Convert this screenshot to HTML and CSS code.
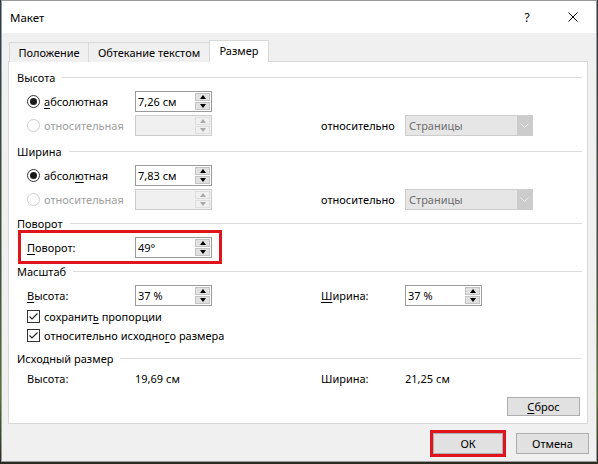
FILE: index.html
```html
<!DOCTYPE html>
<html lang="ru">
<head>
<meta charset="utf-8">
<title>Макет</title>
<link rel="stylesheet" href="styles.css">
</head>
<body>
<div class="window">
  <div class="titlebar">
    <span class="title">Макет</span>
    <span class="cap help">?</span>
    <span class="cap close"><svg width="10" height="10" viewBox="0 0 10 10"><path d="M0.5 0.5L9.5 9.5M9.5 0.5L0.5 9.5" stroke="#000" stroke-width="1" fill="none"/></svg></span>
  </div>
  <div class="content">
    <div class="tabs">
      <div class="tab t1">Положение</div>
      <div class="tab t2">Обтекание текстом</div>
      <div class="tab t3 active">Размер</div>
    </div>
    <div class="panel">
      <div class="group-title">Высота</div>
      <div class="row">
        <span class="opt"><span class="radio checked"></span><span><u>а</u>бсолютная</span></span>
        <div class="spin"><span class="val">7,26 см</span><span class="btns"><span class="btn"><i class="up"></i></span><span class="btn"><i class="down"></i></span></span></div>
      </div>
      <div class="row">
        <span class="opt dis"><span class="radio"></span><span>относительная</span></span>
        <div class="spin disabled"><span class="val"></span><span class="btns"><span class="btn"><i class="up"></i></span><span class="btn"><i class="down"></i></span></span></div>
        <span class="rel">относительно</span>
        <div class="select"><span class="sel-text">Страницы</span><span class="arrow"><svg width="9" height="5" viewBox="0 0 9 5"><path d="M0.5 0.5L4.5 4.5L8.5 0.5" stroke="#eaeaea" fill="none"/></svg></span></div>
      </div>

      <div class="group-title gt2">Ширина</div>
      <div class="row">
        <span class="opt"><span class="radio checked"></span><span>абсол<u>ю</u>тная</span></span>
        <div class="spin"><span class="val">7,83 см</span><span class="btns"><span class="btn"><i class="up"></i></span><span class="btn"><i class="down"></i></span></span></div>
      </div>
      <div class="row">
        <span class="opt dis"><span class="radio"></span><span>относительная</span></span>
        <div class="spin disabled"><span class="val"></span><span class="btns"><span class="btn"><i class="up"></i></span><span class="btn"><i class="down"></i></span></span></div>
        <span class="rel">относительно</span>
        <div class="select"><span class="sel-text">Страницы</span><span class="arrow"><svg width="9" height="5" viewBox="0 0 9 5"><path d="M0.5 0.5L4.5 4.5L8.5 0.5" stroke="#eaeaea" fill="none"/></svg></span></div>
      </div>

      <div class="group-title">Поворот</div>
      <div class="row marked">
        <span class="lbl"><u>П</u>оворот:</span>
        <div class="spin"><span class="val">49°</span><span class="btns"><span class="btn"><i class="up"></i></span><span class="btn"><i class="down"></i></span></span></div>
      </div>

      <div class="group-title">Масштаб</div>
      <div class="row">
        <span class="lbl"><u>В</u>ысота:</span>
        <div class="spin"><span class="val">37 %</span><span class="btns"><span class="btn"><i class="up"></i></span><span class="btn"><i class="down"></i></span></span></div>
        <span class="lbl"><u>Ш</u>ирина:</span>
        <div class="spin"><span class="val">37 %</span><span class="btns"><span class="btn"><i class="up"></i></span><span class="btn"><i class="down"></i></span></span></div>
      </div>
      <div class="check-row"><span class="cb"><svg width="11" height="11" viewBox="0 0 11 11"><path d="M1.5 5.5L4 8L9.5 2.5" stroke="#222" stroke-width="1.1" fill="none"/></svg></span><span>сохранит<u>ь</u> пропорции</span></div>
      <div class="check-row"><span class="cb"><svg width="11" height="11" viewBox="0 0 11 11"><path d="M1.5 5.5L4 8L9.5 2.5" stroke="#222" stroke-width="1.1" fill="none"/></svg></span><span>относительно исходно<u>г</u>о размера</span></div>

      <div class="group-title gt5">Исходный размер</div>
      <div class="row info">
        <span class="lbl">Высота:</span>
        <span class="lbl">19,69 см</span>
        <span class="lbl">Ширина:</span>
        <span class="lbl">21,25 см</span>
      </div>
      <div class="reset-row"><button class="btn-win reset"><u>С</u>брос</button></div>
    </div>
    <div class="footer">
      <button class="btn-win ok">ОК</button>
      <button class="btn-win cancel">Отмена</button>
    </div>
  </div>
</div>
</body>
</html>
```

FILE: styles.css
```css
html, body {
  margin: 0;
  padding: 0;
}
body {
  width: 598px;
  height: 464px;
  overflow: hidden;
  background: linear-gradient(to bottom, #2c3b4c 0%, #3c5a36 60%, #4f7a22 85%, #2a2a22 100%);
  font-family: "Noto Sans", "Open Sans", sans-serif;
  font-size: 11px;
  color: #000;
}
.window {
  margin-left: 1px;
  width: 596px;
  height: 462px;
  box-sizing: border-box;
  border: 1px solid #9a9a9a;
  background: #f0f0f0;
  display: flex;
  flex-direction: column;
}
.titlebar {
  height: 32px;
  background: #fff;
  display: flex;
  align-items: center;
}
.title {
  flex: 1;
  padding-left: 8px;
  font-size: 11.5px;
}
.cap {
  width: 46px;
  height: 32px;
  display: flex;
  align-items: center;
  justify-content: center;
}
.help {
  font-size: 12px;
}
.content {
  padding: 7px 7px 0 6px;
}
.tabs {
  display: flex;
  align-items: flex-end;
  height: 22px;
  margin-bottom: -1px;
  margin-left: 1px;
}
.tab {
  height: 20px;
  box-sizing: border-box;
  border: 1px solid #d9d9d9;
  border-bottom: none;
  background: #f0f0f0;
  display: flex;
  align-items: center;
  justify-content: center;
  padding-bottom: 1px;
}
.t1 { width: 80px; }
.t2 { width: 122px; margin-left: -1px; }
.t3 { width: 60px; margin-left: -1px; }
.tab.active {
  height: 22px;
  background: #fff;
  position: relative;
  z-index: 1;
  padding-bottom: 2px;
}
.panel {
  width: 580px;
  box-sizing: border-box;
  border: 1px solid #d9d9d9;
  background: #fff;
  padding: 3px 5px 7px 8px;
}
.group-title {
  height: 24px;
  display: flex;
  align-items: center;
  gap: 7px;
}
.group-title::after {
  content: "";
  flex: 1;
  border-top: 1px solid #dcdcdc;
  margin-top: 1px;
}
.gt2 { margin-top: 2px; }
.gt5 { margin-top: 1px; }
.row {
  display: grid;
  grid-template-columns: 108px 186px 84px 128px;
  align-items: center;
  height: 24px;
  margin-left: 10px;
}
.row.info { height: 16px; }
.row.marked { position: relative; }
.row.marked::before {
  content: "";
  position: absolute;
  left: -9px;
  top: -5px;
  width: 204px;
  height: 34px;
  box-sizing: border-box;
  border: 3px solid #e0141e;
}
.opt {
  display: flex;
  align-items: center;
  gap: 4px;
}
.opt.dis { color: #a0a0a0; }
.radio {
  width: 13px;
  height: 13px;
  box-sizing: border-box;
  border: 1px solid #333;
  border-radius: 50%;
  background: #fff;
  display: flex;
  align-items: center;
  justify-content: center;
}
.radio.checked::after {
  content: "";
  width: 7px;
  height: 7px;
  border-radius: 50%;
  background: #1a1a1a;
}
.opt.dis .radio { border-color: #cfcfcf; }
.spin {
  width: 77px;
  height: 21px;
  box-sizing: border-box;
  border: 1px solid #9a9a9a;
  background: #fff;
  display: flex;
}
.spin .val {
  flex: 1;
  padding-left: 2px;
  line-height: 19px;
}
.btns {
  width: 15px;
  margin: 1px 1px 1px 0;
  display: flex;
  flex-direction: column;
  gap: 1px;
  background: #fff;
}
.btn {
  flex: 1;
  background: #e1e1e1;
  border: 1px solid #c4c4c4;
  display: flex;
  align-items: center;
  justify-content: center;
}
.up {
  width: 0;
  height: 0;
  border-left: 3.5px solid transparent;
  border-right: 3.5px solid transparent;
  border-bottom: 4px solid #000;
}
.down {
  width: 0;
  height: 0;
  border-left: 3.5px solid transparent;
  border-right: 3.5px solid transparent;
  border-top: 4px solid #000;
}
.spin.disabled {
  border-color: #cccccc;
  background: #f0f0f0;
}
.spin.disabled .btns { background: #f0f0f0; }
.spin.disabled .btn {
  background: #f0f0f0;
  border-color: #dedede;
}
.spin.disabled .up { border-bottom-color: #a8a8a8; }
.spin.disabled .down { border-top-color: #a8a8a8; }
.rel { color: #000; }
.select {
  width: 128px;
  height: 21px;
  box-sizing: border-box;
  border: 1px solid #cccccc;
  background: #e6e6e6;
  display: flex;
}
.sel-text {
  flex: 1;
  padding-left: 3px;
  line-height: 19px;
  color: #6d6d6d;
}
.arrow {
  width: 15px;
  background: #cccccc;
  display: flex;
  align-items: center;
  justify-content: center;
}
.check-row {
  height: 19px;
  margin-left: 10px;
  display: flex;
  align-items: center;
  gap: 4px;
}
.cb {
  width: 13px;
  height: 13px;
  box-sizing: border-box;
  border: 1px solid #333;
  background: #fff;
  display: flex;
  align-items: center;
  justify-content: center;
}
.reset-row {
  display: flex;
  justify-content: flex-end;
  margin-top: 11px;
  padding-right: 2px;
}
.btn-win {
  font-family: inherit;
  font-size: 11px;
  color: #000;
  background: #e1e1e1;
  border: 1px solid #adadad;
  padding: 0;
  margin: 0;
  box-sizing: border-box;
}
.reset {
  width: 73px;
  height: 19px;
}
.footer {
  display: flex;
  justify-content: flex-end;
  gap: 13px;
  margin-top: 9px;
  padding-right: 0;
}
.ok {
  width: 70px;
  height: 21px;
  outline: 3px solid #e0141e;
}
.cancel {
  width: 73px;
  height: 21px;
}
u {
  text-decoration-thickness: 1px;
  text-underline-offset: 2px;
}
```
